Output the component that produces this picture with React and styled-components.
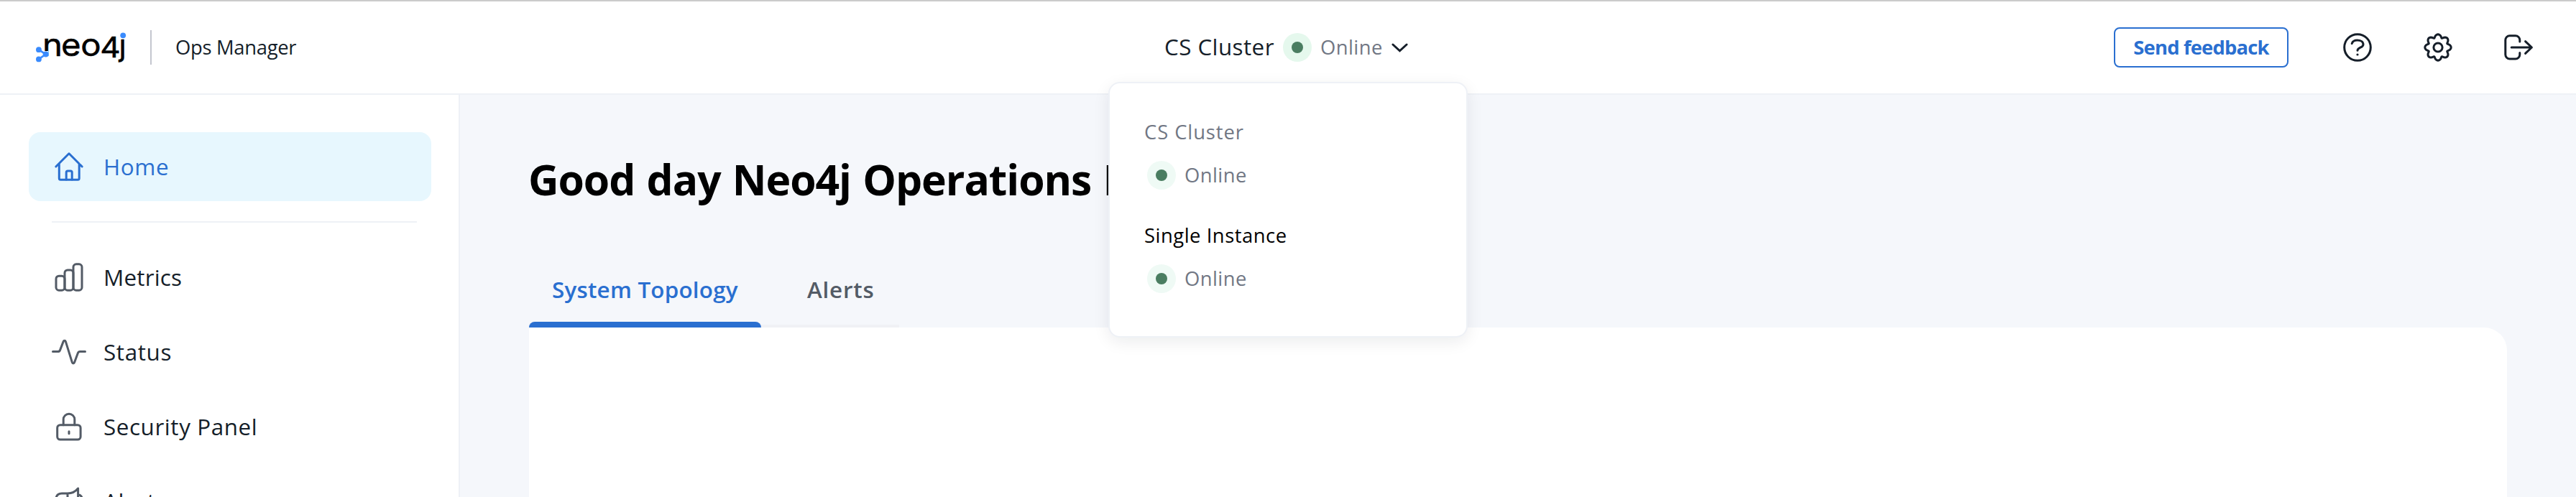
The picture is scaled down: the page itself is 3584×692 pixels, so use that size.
import React from "react";
import styled, { createGlobalStyle, css } from "styled-components";

const colors = {
  ink: "#151e29",
  muted: "#717784",
  icon: "#535b66",
  primary: "#2a6fd0",
  border: "#eef1f6",
  page: "#f5f7fb",
};

const GlobalStyle = createGlobalStyle`
  *, *::before, *::after { box-sizing: border-box; }
  body {
    margin: 0;
    overflow: hidden;
    background: ${colors.page};
    color: ${colors.ink};
    font-family: "Open Sans", "Noto Sans", sans-serif;
  }
  svg { display: block; flex: none; }
`;

const Page = styled.div`
  display: flex;
  flex-direction: column;
  width: 100%;
  height: 692px;
  overflow: hidden;
`;

const Header = styled.header`
  display: grid;
  grid-template-columns: 1fr auto 1fr;
  align-items: center;
  flex: none;
  height: 132px;
  padding: 0 50px;
  background: #fff;
  border-top: 2px solid #cbcbcb;
  border-bottom: 2px solid ${colors.border};
`;

const Brand = styled.div`
  display: flex;
  align-items: center;
`;

const BrandDivider = styled.span`
  width: 2px;
  height: 48px;
  margin: 0 33px;
  background: #c4c6cf;
`;

const Label = styled.span`
  font-size: ${(p) => p.$size || 27.4}px;
  line-height: 40px;
  padding-bottom: ${(p) => p.$lift || 0}px;
  font-weight: ${(p) => p.$weight || 400};
  letter-spacing: ${(p) => p.$tracking || 0}px;
  color: ${(p) => p.$color || colors.ink};
  white-space: nowrap;
`;

const Switcher = styled.div`
  position: relative;
  display: flex;
  align-items: center;
  width: 344px;
  height: 40px;
`;

const SwitcherName = styled.div`
  display: flex;
  width: 165px;
`;

const SwitcherStatus = styled.div`
  display: flex;
  width: 147px;
`;

const Status = styled.div`
  display: flex;
  align-items: center;
  gap: 12px;
  height: 40px;
`;

const Halo = styled.span`
  display: grid;
  place-items: center;
  width: 40px;
  height: 40px;
  border-radius: 50%;
  background: ${(p) => (p.$pale ? "#effaf5" : "#e5f8ed")};

  &::after {
    content: "";
    width: 16px;
    height: 16px;
    border-radius: 50%;
    background: #4a7d61;
  }
`;

const Menu = styled.div`
  position: absolute;
  top: 68px;
  left: 50%;
  z-index: 2;
  display: flex;
  flex-direction: column;
  gap: 44px;
  width: 500px;
  height: 356px;
  padding: 48px;
  transform: translateX(-50%);
  background: #fff;
  border: 2px solid ${colors.border};
  border-radius: 16px;
  box-shadow: 0 6px 22px rgba(12, 26, 37, 0.08);
`;

const MenuItem = styled.div`
  display: flex;
  flex-direction: column;
  gap: 20px;
  height: 100px;

  > ${Label} { height: 40px; }
  > ${Status} { margin-left: 4px; }
`;

const Actions = styled.div`
  display: flex;
  align-items: center;
  justify-content: flex-end;
  gap: 64px;
  margin-right: 6px;
`;

const FeedbackButton = styled.button`
  display: flex;
  align-items: center;
  justify-content: center;
  width: 243px;
  height: 56px;
  margin-right: 8px;
  padding: 0;
  background: #fff;
  border: 2px solid ${colors.primary};
  border-radius: 8px;
  font-family: inherit;
`;

const Body = styled.div`
  display: flex;
  flex: 1;
  min-height: 0;
`;

const Sidebar = styled.nav`
  display: flex;
  flex-direction: column;
  flex: none;
  gap: 8px;
  width: 640px;
  padding: 52px 38px 0 40px;
  background: #fff;
  border-right: 2px solid ${colors.border};
`;

const NavItem = styled.a`
  display: flex;
  align-items: center;
  flex: none;
  gap: 24px;
  width: 560px;
  height: 96px;
  padding: 0 32px;
  border-radius: 16px;
  color: ${colors.icon};
  ${(p) =>
    p.$active &&
    css`
      background: #e7f7fe;
      color: ${colors.primary};
    `}
`;

const NavDivider = styled.hr`
  flex: none;
  width: 508px;
  height: 2px;
  margin: 20px 0 20px 32px;
  border: 0;
  background: ${colors.border};
`;

const Main = styled.main`
  display: flex;
  flex-direction: column;
  flex: 1;
  min-width: 0;
  padding: 81px 96px 0;
`;

const Title = styled.h1`
  flex: none;
  margin: 0 0 98px -1px;
  font-size: 58.8px;
  line-height: 72px;
  font-weight: 700;
  letter-spacing: -1.06px;
  word-spacing: 2px;
  color: #000;
  white-space: nowrap;
`;

const Tabs = styled.div`
  display: flex;
  flex: none;
  gap: 32px;
  width: 515px;
  height: 73px;
  box-shadow: inset 0 -4px #f0f1f5;
`;

const Tab = styled.div`
  display: flex;
  flex-direction: column;
  justify-content: space-between;
  width: ${(p) => p.$width}px;

  > ${Label} {
    padding-left: 32px;
  }

  ${(p) =>
    p.$active &&
    css`
      &::after {
        content: "";
        height: 8px;
        border-radius: 8px 8px 0 0;
        background: ${colors.primary};
      }
    `}
`;

const Panel = styled.section`
  flex: 1;
  background: #fff;
  border-top-right-radius: 32px;
`;

const Icon = ({ size = 48, children }) => (
  <svg
    width={size}
    height={size}
    viewBox={`0 0 ${size} ${size}`}
    fill="none"
    stroke="currentColor"
    strokeWidth="3"
    strokeLinecap="round"
    strokeLinejoin="round"
  >
    {children}
  </svg>
);

const HomeIcon = () => (
  <Icon>
    <path d="M5.8 24 24 5.8 42.2 24M10.3 20V40.3a2 2 0 0 0 2 2H36.2a2 2 0 0 0 2-2V20" />
    <path d="M20.2 42V32a2 2 0 0 1 2-2h4a2 2 0 0 1 2 2V42" />
  </Icon>
);

const MetricsIcon = () => (
  <Icon>
    <rect x="6" y="22.2" width="12" height="20" rx="4" />
    <rect x="18" y="14" width="12" height="28.2" rx="4" />
    <rect x="30" y="5.8" width="12" height="36.4" rx="4" />
  </Icon>
);

const StatusIcon = () => (
  <Icon>
    <path d="M1.5 23.6H8.5C10 23.6 11 22.9 11.5 21.6L16.1 9.6C16.8 7.7 18.8 7.7 19.4 9.6L28.4 38.6C29 40.5 30.9 40.5 31.6 38.6L36.4 25.6C36.9 24.3 37.8 23.6 39.3 23.6H46.5" />
  </Icon>
);

const LockIcon = () => (
  <Icon>
    <rect x="7.7" y="21.7" width="32.4" height="20.4" rx="4" />
    <path d="M16.2 21.7V14a7.8 7.8 0 0 1 15.6 0v7.7M24 30.7v3" />
  </Icon>
);

const MegaphoneIcon = () => (
  <Icon>
    <path d="M5.8 22C5.8 16.5 8.5 13 14 13H22C28 13 33 10.5 36.6 6V42M22 13V32M37 14.5C40.5 15.5 42.3 18 42.3 21.5V26" />
    <path d="M5.8 22V26C5.8 29 8 32 14 32H22" />
  </Icon>
);

const HelpIcon = () => (
  <Icon>
    <circle cx="24" cy="24" r="18.3" />
    <path d="M16.2 18.6C17.2 15.6 20.1 14.1 23.6 14.1C28.2 14.1 32 16.2 32 19.9C32 24.6 24 23.6 24 28.2" />
    <circle cx="24" cy="34" r="1.6" fill="currentColor" stroke="none" />
  </Icon>
);

// Eight rounded teeth traced as a polar wave around the hub.
const gearPath =
  Array.from({ length: 96 }, (_, i) => {
    const a = (i / 96) * Math.PI * 2;
    const r = 16 + 2.2 * Math.cos(8 * a);
    const t = a + 0.05 * Math.sin(8 * a);
    return `${i ? "L" : "M"}${(24 + r * Math.cos(t)).toFixed(2)} ${(24 + r * Math.sin(t)).toFixed(2)}`;
  }).join("") + "Z";

const GearIcon = () => (
  <Icon>
    <path d={gearPath} />
    <circle cx="24" cy="24" r="6.1" />
  </Icon>
);

const LogoutIcon = () => (
  <Icon>
    <path d="M25.8 16V13.8a6 6 0 0 0-6-6H11.8a6 6 0 0 0-6 6V34a6 6 0 0 0 6 6H19.8a6 6 0 0 0 6-6V31.6" />
    <path d="M14.2 24H42.4M33.6 15.6 42.4 24 33.6 32.4" />
  </Icon>
);

const ChevronIcon = () => (
  <Icon size={32}>
    <path d="M5.9 12 15.5 20.8 25.1 12" strokeLinejoin="miter" />
  </Icon>
);

const LogoText = styled.text`
  font-family: "Inter", "Open Sans", sans-serif;
  font-weight: 400;
  fill: #000;
  stroke: #000;
  stroke-width: 0.5px;
`;

const Logo = () => (
  <svg width="126" height="48" viewBox="50 42 126 48">
    <g transform="scale(1.1 1)">
      <LogoText x="53.7 77.3 102.1" y="78" fontSize="43">neo</LogoText>
      <LogoText x="126.7" y="80" fontSize="40">4</LogoText>
    </g>
    <LogoText x="165.5" y="78" fontSize="42">ȷ</LogoText>
    <rect x="59" y="71" width="8" height="9" fill="#fff" />
    <g fill="#3a8bfd">
      <path d="M53.9 69.2 63.6 75.6 53.9 82.4" fill="none" stroke="#3a8bfd" strokeWidth="2.6" />
      <circle cx="53.9" cy="69.2" r="3.9" />
      <circle cx="63.7" cy="75.6" r="4" />
      <circle cx="53.9" cy="82.4" r="3.9" />
      <circle cx="171.2" cy="49.3" r="3.9" />
    </g>
  </svg>
);

const Online = ({ pale }) => (
  <Status>
    <Halo $pale={pale} />
    <Label $tracking={0.43} $color={colors.muted}>Online</Label>
  </Status>
);

const navItems = [
  { label: "Metrics", tracking: 0.21, icon: MetricsIcon },
  { label: "Status", tracking: 0.64, icon: StatusIcon },
  { label: "Security Panel", tracking: 0.58, icon: LockIcon },
  { label: "Alerts", tracking: 0.6, icon: MegaphoneIcon },
];

const instances = [
  { name: "CS Cluster", tracking: 0.92, color: colors.muted },
  { name: "Single Instance", tracking: 0.52, color: "#000" },
];

export default function App() {
  return (
    <Page>
      <GlobalStyle />
      <Header>
        <Brand>
          <Logo />
          <BrandDivider />
          <Label $tracking={-0.31}>Ops Manager</Label>
        </Brand>
        <Switcher>
          <SwitcherName>
            <Label $size={31.4} $lift={2} $tracking={0.42}>CS Cluster</Label>
          </SwitcherName>
          <SwitcherStatus>
            <Online />
          </SwitcherStatus>
          <ChevronIcon />
          <Menu>
            {instances.map((item) => (
              <MenuItem key={item.name}>
                <Label $tracking={item.tracking} $color={item.color}>{item.name}</Label>
                <Online pale />
              </MenuItem>
            ))}
          </Menu>
        </Switcher>
        <Actions>
          <FeedbackButton>
            <Label $weight={700} $tracking={-0.82} $color={colors.primary}>Send feedback</Label>
          </FeedbackButton>
          <HelpIcon />
          <GearIcon />
          <LogoutIcon />
        </Actions>
      </Header>
      <Body>
        <Sidebar>
          <NavItem $active>
            <HomeIcon />
            <Label $size={31.4} $lift={1} $tracking={0.66} $color={colors.primary}>Home</Label>
          </NavItem>
          <NavDivider />
          {navItems.map(({ label, tracking, icon: ItemIcon }) => (
            <NavItem key={label}>
              <ItemIcon />
              <Label $size={31.4} $lift={1} $tracking={tracking}>{label}</Label>
            </NavItem>
          ))}
        </Sidebar>
        <Main>
          <Title>Good day Neo4j Operations Manager</Title>
          <Tabs>
            <Tab $active $width={323}>
              <Label $size={31.4} $weight={600} $tracking={0.21} $color={colors.primary}>System Topology</Label>
            </Tab>
            <Tab $width={160}>
              <Label $size={31.4} $weight={600} $tracking={0.8} $color={colors.icon}>Alerts</Label>
            </Tab>
          </Tabs>
          <Panel />
        </Main>
      </Body>
    </Page>
  );
}
